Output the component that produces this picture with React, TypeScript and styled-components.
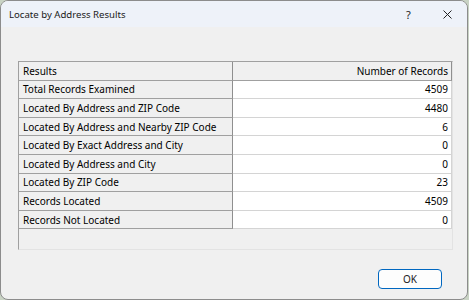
import React from 'react';
import styled, { createGlobalStyle } from 'styled-components';

const GlobalStyle = createGlobalStyle`
  html, body {
    margin: 0;
    padding: 0;
    background: #c9d3c4;
  }
  body {
    font-family: 'Noto Sans', 'Open Sans', sans-serif;
    font-size: 10px;
    color: #000;
  }
`;

const Window = styled.div`
  box-sizing: border-box;
  width: 468px;
  height: 300px;
  border: 1px solid #8c8c8c;
  border-radius: 8px;
  overflow: hidden;
  display: flex;
  flex-direction: column;
  background: #f0f0f0;
`;

const TitleBar = styled.div`
  height: 26px;
  flex-shrink: 0;
  display: flex;
  align-items: center;
  padding-left: 8px;
  background: #eef2f9;
`;

const Title = styled.div`
  flex: 1;
  font-size: 9.6px;
  color: #1a1a1a;
`;

const CaptionButton = styled.div`
  width: 39px;
  height: 26px;
  display: flex;
  align-items: center;
  justify-content: center;
  color: #222;
  font-size: 11px;
`;

const Body = styled.div`
  display: flex;
  flex-direction: column;
  padding: 34px 14px 0 17px;
`;

const GridFrame = styled.div`
  box-sizing: border-box;
  height: 189px;
  border-top: 1px solid #a0a0a0;
  border-left: 1px solid #a0a0a0;
  border-right: 1px solid #e3e3e3;
  border-bottom: 1px solid #e3e3e3;
  background: #f0f0f0;
  display: grid;
  grid-template-columns: 214px 1fr;
  grid-auto-rows: 18.6px;
  align-content: start;
`;

interface CellProps {
  $kind: 'header' | 'rowHeader' | 'data';
  $right?: boolean;
}

const Cell = styled.div<CellProps>`
  box-sizing: border-box;
  display: flex;
  align-items: center;
  justify-content: ${({ $right }) => ($right ? 'flex-end' : 'flex-start')};
  padding: 0 3px 0 4px;
  white-space: nowrap;
  overflow: hidden;
  background: ${({ $kind }) => ($kind === 'data' ? '#ffffff' : '#f0f0f0')};
  border-right: 1px solid
    ${({ $kind }) => ($kind === 'data' ? '#d4d4d4' : '#8f8f8f')};
  border-bottom: 1px solid
    ${({ $kind }) => ($kind === 'data' ? '#d4d4d4' : '#a0a0a0')};
`;

const Footer = styled.div`
  display: flex;
  justify-content: flex-end;
  padding: 19px 25px 0 0;
`;

const OkButton = styled.button`
  box-sizing: border-box;
  width: 64px;
  height: 20px;
  border: 1px solid #0067c0;
  border-radius: 4px;
  background: #fdfdfd;
  font-family: inherit;
  font-size: 10px;
  color: #1a1a1a;
  padding: 0;
`;

const rows: [string, number][] = [
  ['Total Records Examined', 4509],
  ['Located By Address and ZIP Code', 4480],
  ['Located By Address and Nearby ZIP Code', 6],
  ['Located By Exact Address and City', 0],
  ['Located By Address and City', 0],
  ['Located By ZIP Code', 23],
  ['Records Located', 4509],
  ['Records Not Located', 0]
];

const App: React.FC = () => {
  return (
    <>
      <GlobalStyle />
      <Window>
        <TitleBar>
          <Title>Locate by Address Results</Title>
          <CaptionButton>?</CaptionButton>
          <CaptionButton>
            <svg width="9" height="9" viewBox="0 0 9 9">
              <path d="M0.5 0.5L8.5 8.5M8.5 0.5L0.5 8.5" stroke="#222" strokeWidth="1" />
            </svg>
          </CaptionButton>
        </TitleBar>
        <Body>
          <GridFrame>
            <Cell $kind="header">Results</Cell>
            <Cell $kind="header" $right>
              Number of Records
            </Cell>
            {rows.map(([label, count]) => (
              <React.Fragment key={label}>
                <Cell $kind="rowHeader">{label}</Cell>
                <Cell $kind="data" $right>
                  {count}
                </Cell>
              </React.Fragment>
            ))}
          </GridFrame>
        </Body>
        <Footer>
          <OkButton>OK</OkButton>
        </Footer>
      </Window>
    </>
  );
};

export default App;
